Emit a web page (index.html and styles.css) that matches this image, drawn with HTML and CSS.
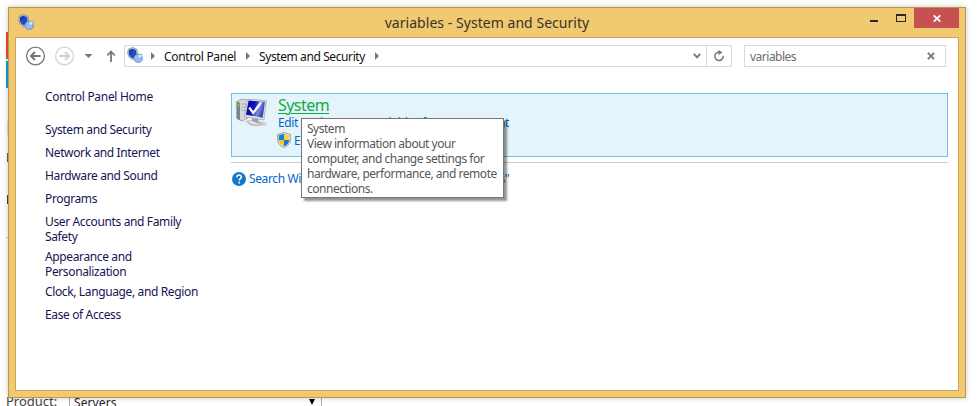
FILE: index.html
```html
<!DOCTYPE html>
<html lang="en">
<head>
<meta charset="utf-8">
<title>variables - System and Security</title>
<link rel="stylesheet" href="styles.css">
</head>
<body>
<svg class="defs" width="0" height="0">
  <defs>
    <linearGradient id="blue" x1="0" y1="0" x2="1" y2="1"><stop offset="0" stop-color="#0a2aa0"/><stop offset=".55" stop-color="#2450c8"/><stop offset="1" stop-color="#0c2a90"/></linearGradient>
    <linearGradient id="screen" x1="0" y1="0" x2="1" y2=".3"><stop offset="0" stop-color="#0000b4"/><stop offset=".5" stop-color="#1018b4"/><stop offset=".75" stop-color="#7f8cd8"/><stop offset="1" stop-color="#3444b8"/></linearGradient>
    <symbol id="security" viewBox="0 0 16 16">
      <path d="M5.500.500 9.800 2.200l.6 4.300-1.600 4-3.300 2.100-3.100-2.200L.700 6.500l.6-4.300z" fill="#c5ccda" stroke="#77839c" stroke-width=".8"/>
      <path d="M5.500 1.700 9 3l.4 3.400L8.100 9.700 5.500 11.300 3 9.600 1.800 6.400 2.200 3z" fill="url(#blue)"/>
      <circle cx="11.200" cy="11.300" r="4.100" fill="#9bbdf0" stroke="#4d7fc8" stroke-width=".8"/>
      <path d="M11 11.500V7.500l4-.3-.3 3.700z" fill="#d9e9fd" stroke="#6c99dc" stroke-width=".6"/>
    </symbol>
  </defs>
</svg>
<div class="backdrop">
  <i class="mark orange"></i><i class="mark cyan"></i>
  <i class="mark sand"></i><i class="mark wine"></i><i class="mark dark"></i><i class="mark line"></i>
  <div class="product"><span class="product-label">Product:</span><span class="select"><span>Servers</span><svg width="6" height="7"><path d="M0 1h6L3 7z"/></svg></span></div>
</div>
<main class="window">
  <header class="titlebar">
    <svg class="app-icon" width="16" height="16"><use href="#security"/></svg>
    <h1 class="title">variables - System and Security</h1>
    <div class="controls">
      <svg class="min" width="8" height="2"><path d="M0 0h8v2H0z" fill="#2a2724"/></svg>
      <svg class="max" width="10" height="8"><path d="M0 0h10v8H0zM1 2v5h8V2z" fill="#2a2724" fill-rule="evenodd"/></svg>
      <span class="close"><svg width="8" height="7"><path d="M.7.300 7.300 6.700M7.300.300.700 6.700" stroke="#fff" stroke-width="1.700"/></svg></span>
    </div>
  </header>
  <section class="client">
    <div class="toolbar">
      <svg class="nav-icons" width="104" height="22" fill="none">
        <circle cx="13.500" cy="11" r="8.900" stroke="#777" stroke-width="1.300"/>
        <path d="M18.500 11H9.500M13 7l-4 4 4 4" stroke="#777" stroke-width="2"/>
        <circle cx="42.500" cy="11" r="8.900" stroke="#d2d2d2" stroke-width="1.200"/>
        <path d="M37.500 11h9M43 7l4 4-4 4" stroke="#d0d0d0" stroke-width="2"/>
        <path d="M62.500 9h8l-4 4z" fill="#777"/>
        <path d="M89 17V6.500M85.300 10.500 89 6.500l3.700 4" stroke="#777" stroke-width="1.800"/>
      </svg>
      <div class="address">
        <svg class="loc" width="16" height="16"><use href="#security"/></svg>
        <svg class="arrow a1" width="4" height="8"><path d="M0 0l4 4-4 4z"/></svg>
        <span class="crumb c1">Control Panel</span>
        <svg class="arrow a2" width="4" height="8"><path d="M0 0l4 4-4 4z"/></svg>
        <span class="crumb c2">System and Security</span>
        <svg class="arrow a3" width="4" height="8"><path d="M0 0l4 4-4 4z"/></svg>
        <svg class="chev" width="8" height="6" fill="none"><path d="M.8.800 4 4.300 7.200.800" stroke="#777" stroke-width="1.900"/></svg>
        <span class="refresh"><svg width="12" height="12" fill="none"><path d="M7.500 2.300a4.200 4.200 0 1 0 2.700 3.500" stroke="#777" stroke-width="1.500"/><path d="M5.500 0v5L9.500 2.500z" fill="#777"/></svg></span>
      </div>
      <div class="search"><span>variables</span><svg width="8" height="8"><path d="M.8.800 7.200 7.200M7.200.800.800 7.200" stroke="#777" stroke-width="1.800"/></svg></div>
    </div>
    <div class="body">
      <nav class="side">
        <a class="home">Control Panel Home</a>
        <a>System and Security</a>
        <a>Network and Internet</a>
        <a>Hardware and Sound</a>
        <a>Programs</a>
        <a class="two">User Accounts and Family<br>Safety</a>
        <a class="two">Appearance and<br>Personalization</a>
        <a>Clock, Language, and Region</a>
        <a>Ease of Access</a>
      </nav>
      <div class="results">
        <article class="card">
          <svg class="pc" width="32" height="33">
            <ellipse cx="20" cy="28.500" rx="8" ry="2.800" fill="#c6c9cc"/>
            <path d="M.7 6.500 5 4.300l7 .7v18l-6 3-5-2.300z" fill="#d6d8da" stroke="#8c9094" stroke-width=".7"/>
            <path d="M.7 6.500 4 7.800v17.400l-3.300-1.600z" fill="#7f8286"/><path d="M1.500 8.500l1.700.6v2.400l-1.700-.5z" fill="#67dc28"/>
            <path d="M5.500 9h5M5.500 12h4.500M5.500 15h4" stroke="#a6a9ae"/>
            <path d="M16 21h7l-1 7h-6z" fill="#9da1a8"/>
            <path d="M11.500 4.300 30.500 5.600 27.800 25 8.500 21.600z" fill="#e6e8eb" stroke="#9fa4ad" stroke-width=".8"/>
            <path d="M12.600 5.600 29 6.800 26.700 22.700 9.900 19.700z" fill="url(#screen)"/>
            <path d="M13.200 12.500l4 5.500L25 7.500" fill="none" stroke="#fff" stroke-width="2.200"/>
            <path d="M10 26.500l11 4 4-1-10-4z" fill="#eceeef" stroke="#999da3" stroke-width=".6"/>
            <ellipse cx="28.300" cy="29" rx="2.300" ry="1.300" fill="#dfe1e3" stroke="#a1a4a8" stroke-width=".5"/>
          </svg>
          <div class="card-text">
            <a class="heading">System</a>
            <a class="task t1">Edit environment variables for your account</a>
            <div class="task-row"><svg width="14" height="16">
              <path d="M7 .5 13.500 2.500V8c0 3.500-2.500 6-6.500 7.500C3 14 .5 11.500.500 8V2.500z" fill="#d8dee8" stroke="#909baa" stroke-width=".8"/>
              <path d="M7 1.800V8H1.700V3.300z" fill="#2878cc"/><path d="M7 1.800V8h5.300V3.300z" fill="#f8d24a"/>
              <path d="M1.700 8H7v6.200C3.700 13 1.800 11 1.700 8z" fill="#f4c52e"/><path d="M12.300 8H7v6.200C10.300 13 12.200 11 12.300 8z" fill="#2374c5"/>
            </svg><a class="task">Edit the system</a></div>
          </div>
        </article>
        <div class="help"><svg width="14" height="14"><circle cx="7" cy="7" r="7" fill="#1479c9"/><path d="M4.900 5.200C5 2.300 9.300 2.500 9.300 5 9.300 6.700 7.200 6.600 7.200 8.600M7.200 9.700v1.800" fill="none" stroke="#fff" stroke-width="1.500"/></svg><a>Search Windows Help and Support for "variables"</a></div>
      </div>
    </div>
  </section>
  <aside class="tooltip">System<br>View information about your<br>computer, and change settings for<br>hardware, performance, and remote<br>connections.</aside>
</main>
</body>
</html>
```
FILE: styles.css
```css
* { box-sizing: border-box; }
body { margin: 0; width: 977px; height: 406px; overflow: hidden; position: relative; background: #fff; font: 12px/15px "Noto Sans", sans-serif; letter-spacing: -.37px; white-space: nowrap; }
svg { display: block; flex: none; }
.defs { position: absolute; }
.backdrop { height: 406px; padding-top: 391px; overflow: hidden; color: #444; }
.mark { position: absolute; left: 6px; width: 2px; }
.orange { top: 32px; height: 27px; background: #f04e23; }
.cyan { top: 61px; height: 27px; background: #00a1e8; }
.sand { top: 121px; height: 14px; background: #f5dfba; left: 7px; width: 1px; }
.wine { top: 153px; height: 9px; background: #855251; left: 7px; width: 1px; }
.dark { top: 195px; height: 9px; background: #444; left: 7px; width: 1px; }
.line { top: 237px; height: 1px; background: #ccc; }
.product { display: flex; padding-left: 6px; font-size: 13px; line-height: 20px; letter-spacing: 0; }
.product-label { width: 63px; }
.select { width: 253px; height: 30px; border: 1px solid #aaa; padding: 0 6px 0 4px; display: flex; justify-content: space-between; color: #222; font-size: 12px; line-height: 22px; letter-spacing: .1px; }
.select svg { margin-top: 6px; }
.window { position: absolute; left: 8px; top: 7px; width: 958px; height: 391px; padding: 0 6px 6px; border: 1px solid #b8984f; background: #f0c971; box-shadow: 0 0 5px rgba(0,0,0,.22); }
.titlebar { height: 29px; display: flex; position: relative; }
.app-icon { margin: 6px 0 0 3px; }
.title { margin: 5px 0 0; position: absolute; left: 0; right: 0; text-align: center; font-weight: 400; font-size: 14px; line-height: 20px; letter-spacing: .04px; color: #39332a; }
.controls { margin-left: auto; display: flex; }
.min { margin: 12px 18px 0 0; }
.max { margin: 6px 8px 0 0; }
.close { width: 45px; height: 20px; background: #c75050; display: grid; place-items: center; }
.client { height: 354px; border: 1px solid #cfa64f; background: #fff; }
.toolbar { display: flex; padding: 7px 0 0 6px; }
.nav-icons { margin-right: -2px; }
.address { width: 608px; height: 22px; border: 1px solid #d9d9d9; display: flex; align-items: center; color: #111; }
.loc { margin-left: 2px; align-self: flex-start; margin-top: 1px; }
.arrow { fill: #777; }
.a1 { margin-left: 8px; }
.c1 { margin-left: 9px; width: 72px; letter-spacing: -.3px; }
.a2 { margin-left: 10px; }
.c2 { margin-left: 9px; width: 106px; letter-spacing: -.4px; }
.a3 { margin-left: 10px; }
.chev { margin-left: auto; margin-right: 5px; }
.refresh { width: 25px; height: 20px; border-left: 1px solid #d9d9d9; display: grid; place-items: center; }
.search { margin-left: 12px; width: 202px; height: 22px; border: 1px solid #d9d9d9; padding: 0 10px 0 5px; display: flex; justify-content: space-between; align-items: center; color: #6d6d6d; letter-spacing: -.5px; }
.body { display: flex; }
.side { width: 215px; padding: 22px 0 0 29px; color: #151555; }
.side a { display: block; margin-bottom: 8px; }
.side .home { margin-bottom: 18px; letter-spacing: -.3px; }
.side .two { margin-bottom: 5px; }
.results { width: 717px; padding-top: 26px; }
.card { height: 64px; border: 1px solid #70c0e7; background: #e5f3fb; display: flex; padding: 1px 0 0 4px; }
.card-text { margin-left: 10px; }
.heading { display: block; height: 20px; color: #0caf3f; font-size: 16px; line-height: 20px; letter-spacing: -.55px; text-decoration: underline; text-decoration-thickness: 1px; text-underline-offset: 2px; }
.task, .help { color: #0066cc; }
.t1 { display: block; }
.task-row { display: flex; align-items: center; margin: 2px 0 0 -1px; gap: 3px; }
.help { margin-top: 5px; border-top: 1px solid #ccc; display: flex; align-items: center; padding-top: 8px; gap: 3px; padding-left: 1px; }
.tooltip { position: absolute; left: 292px; top: 110px; width: 203px; height: 80px; border: 1px solid #767676; background: #fff; color: #575757; padding: 2px 5px; letter-spacing: -.48px; box-shadow: 3px 3px 2px rgba(0,0,0,.42); }
```
